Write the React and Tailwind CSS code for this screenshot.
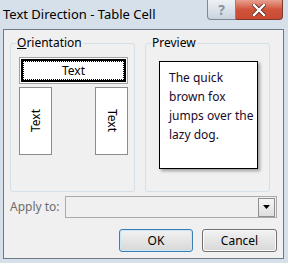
import React from "react";

const font = { fontFamily: '"Noto Sans", "Liberation Sans", sans-serif' };

const GroupBox = ({ label, children, className = "" }) => (
  <fieldset className={`w-[125px] h-[156px] border border-[#d5dfe5] rounded-[3px] ${className}`}>
    <legend className="ml-[5px] px-px text-[12px] leading-[14px] text-black">{label}</legend>
    {children}
  </fieldset>
);

export default function App() {
  return (
    <div className="w-[288px] h-[263px] bg-[#d6e0eb] flex flex-col text-black" style={font}>
      {/* Title bar */}
      <div className="h-[29px] flex items-start justify-between shrink-0">
        <div className="pl-[3px] pt-[6px] text-[13px] leading-[16px] text-black">Text Direction - Table Cell</div>
        <div className="flex mr-[5px]">
          <div className="w-[29px] h-[20px] border border-[#7c8896] border-t-0 rounded-bl-[4px] bg-gradient-to-b from-[#eef2f6] to-[#c9d3de] flex items-center justify-center text-[14px] font-bold text-[#8a94a0] leading-none">
            ?
          </div>
          <div className="w-[47px] h-[20px] border border-[#7a3a30] border-t-0 border-l-0 rounded-br-[4px] bg-gradient-to-b from-[#e8a08f] via-[#d0533b] to-[#c94a33] flex items-center justify-center">
            <svg width="14" height="12" viewBox="0 0 14 12">
              <path d="M2 1 L12 11 M12 1 L2 11" stroke="#5a2a22" strokeWidth="4" strokeLinecap="square" />
              <path d="M2 1 L12 11 M12 1 L2 11" stroke="#ffffff" strokeWidth="2.4" strokeLinecap="square" />
            </svg>
          </div>
        </div>
      </div>

      {/* Client area */}
      <div className="ml-[3px] mr-[4px] h-[230px] border border-[#6e7986] bg-[#f0f0f0] flex flex-col">
        <div className="flex gap-[10px] pl-[6px] pt-[6px]">
          <GroupBox label={<span><span className="underline">O</span>rientation</span>}>
            <div className="pl-[8px] pt-[7px] flex flex-col">
              <div className="w-[109px] h-[27px] border border-[#a0a0a0] bg-white p-px">
                <div className="h-full border-2 border-black">
                  <div className="h-full border border-dotted border-black flex items-center justify-center text-[12px]">
                    Text
                  </div>
                </div>
              </div>
              <div className="flex justify-between w-[109px] mt-[3px]">
                <div className="w-[33px] h-[68px] border border-[#8c8c8c] bg-white flex items-center justify-center">
                  <span className="[writing-mode:vertical-rl] rotate-180 text-[12px] leading-none">Text</span>
                </div>
                <div className="w-[33px] h-[68px] border border-[#8c8c8c] bg-white flex items-center justify-center">
                  <span className="[writing-mode:vertical-rl] text-[12px] leading-none">Text</span>
                </div>
              </div>
            </div>
          </GroupBox>
          <GroupBox label="Preview">
            <div className="pl-[13px] pt-[11px]">
              <div className="w-[99px] h-[108px] border border-black bg-white shadow-[2px_2px_3px_rgba(0,0,0,0.35)] pl-[9px] pt-[6px] text-[12px] leading-[19px] text-[#1a0a2a]">
                The quick
                <br />
                brown fox
                <br />
                jumps over the
                <br />
                lazy dog.
              </div>
            </div>
          </GroupBox>
        </div>

        {/* Apply to */}
        <div className="flex items-center pl-[6px] mt-[4px]">
          <span className="w-[55px] text-[12px] text-[#6d6d6d]">Apply to:</span>
          <div className="w-[212px] h-[22px] border border-[#ababab] bg-[#f0f0f0] flex justify-end items-center pr-px">
            <div className="w-[17px] h-[19px] border border-[#8f8f8f] bg-gradient-to-b from-[#f6f6f6] to-[#dedede] flex items-center justify-center">
              <svg width="7" height="4" viewBox="0 0 7 4">
                <path d="M0 0 H7 L3.5 4 Z" fill="#000" />
              </svg>
            </div>
          </div>
        </div>

        {/* Buttons */}
        <div className="flex justify-end gap-[9px] pr-[6px] mt-[11px]">
          <button className="w-[74px] h-[23px] border border-[#3c7fb1] rounded-[3px] bg-gradient-to-b from-[#f2f2f2] to-[#d8d8d8] shadow-[inset_0_0_0_1px_#c8e6f8] text-[12px] leading-none">
            OK
          </button>
          <button className="w-[75px] h-[23px] border border-[#707070] rounded-[3px] bg-gradient-to-b from-[#f2f2f2] to-[#d8d8d8] shadow-[inset_0_0_0_1px_#fbfbfb] text-[12px] leading-none">
            Cancel
          </button>
        </div>
      </div>
    </div>
  );
}
